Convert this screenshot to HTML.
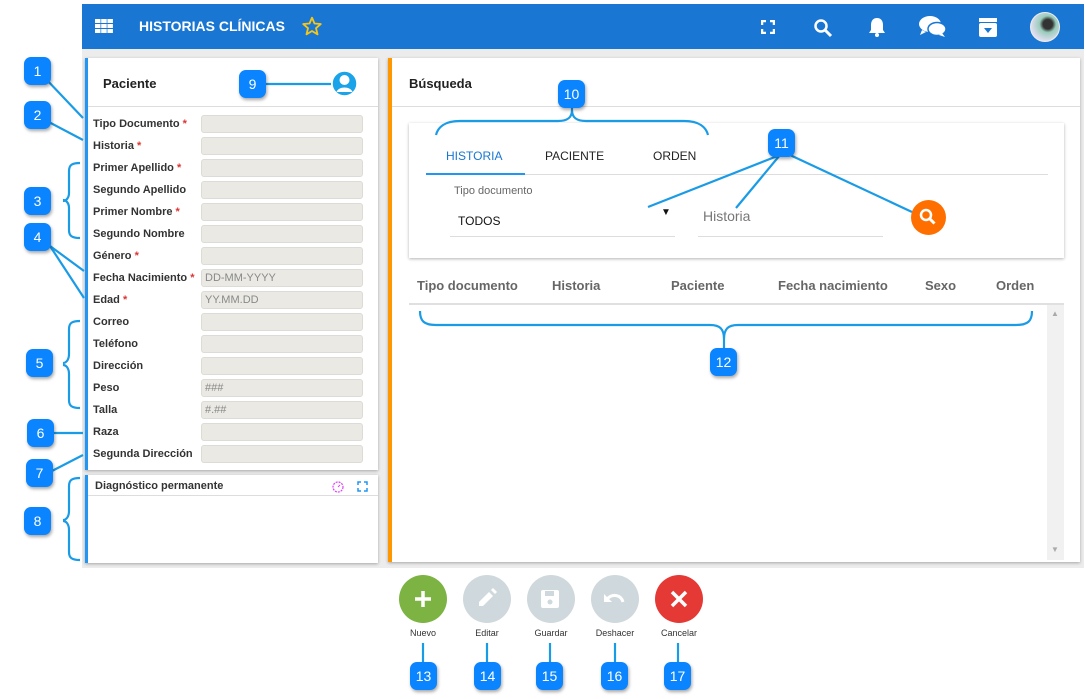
<!DOCTYPE html>
<html><head><meta charset="utf-8"><style>
*{margin:0;padding:0;box-sizing:border-box}
body{width:1086px;height:699px;background:#fff;font-family:"Liberation Sans",Arial,sans-serif;position:relative;overflow:hidden;color:#222}
.abs{position:absolute}
.hdr{left:82px;top:4px;width:1002px;height:45px;background:#1976d2}
.bg{left:82px;top:49px;width:1002px;height:519px;background:#ececec}
.card{background:#fff;box-shadow:0 1px 3px rgba(0,0,0,.3)}
.lbl{left:93px;font-size:11px;font-weight:bold;color:#333}
.lbl b{color:#d33;font-weight:bold}
.inp{left:201px;width:162px;height:18px;background:#eae9e4;border:1px solid #dcdbd6;border-radius:3px;font-size:11px;color:#888;padding:2px 3px}
.co{width:27px;height:28px;background:#0a84ff;border-radius:7px;color:#fff;font-size:14px;text-align:center;line-height:28px;box-shadow:1px 2px 3px rgba(0,0,0,.35);font-family:"Liberation Sans Narrow","Liberation Sans",sans-serif}
.btn{width:48px;height:48px;border-radius:50%;top:575px}
.bl{font-size:9px;color:#333;top:628px;width:70px;text-align:center}
.th{top:278px;font-size:13px;font-weight:bold;color:#666}
</style></head><body>
<div class="abs hdr"></div>
<div class="abs bg"></div>
<svg class="abs" style="left:95px;top:19px" width="18" height="14"><g fill="#fff"><rect x="0" y="0" width="5.5" height="4"/><rect x="6.2" y="0" width="5.5" height="4"/><rect x="12.4" y="0" width="5.5" height="4"/><rect x="0" y="5" width="5.5" height="4"/><rect x="6.2" y="5" width="5.5" height="4"/><rect x="12.4" y="5" width="5.5" height="4"/><rect x="0" y="10" width="5.5" height="4"/><rect x="6.2" y="10" width="5.5" height="4"/><rect x="12.4" y="10" width="5.5" height="4"/></g></svg>
<div class="abs" style="left:139px;top:18px;color:#fff;font-weight:bold;font-size:14px">HISTORIAS CLÍNICAS</div>
<svg class="abs" style="left:302px;top:16px" width="20" height="20" viewBox="0 0 24 24"><path d="M12 2l3 7 7.5.6-5.7 5 1.8 7.4L12 18l-6.6 4 1.8-7.4-5.7-5L9 9z" fill="none" stroke="#f5c518" stroke-width="2.2" stroke-linejoin="round"/></svg>
<svg class="abs" style="left:761px;top:20px" width="14" height="14"><path d="M1 5V1h4M9 1h4v4M13 9v4H9M5 13H1V9" fill="none" stroke="#fff" stroke-width="2.5"/></svg>
<svg class="abs" style="left:813px;top:18px" width="20" height="20"><circle cx="8" cy="8" r="5.5" fill="none" stroke="#fff" stroke-width="2.5"/><path d="M12 12l6 6" stroke="#fff" stroke-width="3"/></svg>
<svg class="abs" style="left:867px;top:16px" width="20" height="22"><path d="M10 2c-4 0-6 3-6 7v5l-2 3h16l-2-3V9c0-4-2-7-6-7z" fill="#fff"/><circle cx="10" cy="19" r="2" fill="#fff"/></svg>
<svg class="abs" style="left:918px;top:15px" width="30" height="24"><ellipse cx="12" cy="9" rx="11" ry="8" fill="#fff"/><path d="M4 15l-2 5 6-3z" fill="#fff"/><ellipse cx="19" cy="14" rx="9" ry="6.5" fill="#fff" stroke="#1976d2" stroke-width="1.5"/><path d="M24 18l3 4-6-2z" fill="#fff"/></svg>
<svg class="abs" style="left:978px;top:17px" width="20" height="21"><rect x="1" y="1" width="18" height="4" fill="#fff"/><rect x="1" y="6" width="18" height="14" rx="2" fill="#fff"/><path d="M6 11h8l-4 5z" fill="#1976d2"/></svg>
<div class="abs" style="left:1030px;top:12px;width:30px;height:30px;border-radius:50%;background:radial-gradient(circle at 60% 40%,#333 0 20%,#9cb 35%,#dde 70%);border:1px solid #eee"></div>

<div class="abs card" style="left:85px;top:58px;width:293px;height:412px;border-left:3px solid #2196f3"></div>
<div class="abs" style="left:103px;top:76px;font-size:13px;font-weight:bold">Paciente</div>
<div class="abs" style="left:88px;top:106px;width:290px;height:1px;background:#ddd"></div>
<svg class="abs" style="left:331px;top:70px" width="27" height="27"><circle cx="13.5" cy="13.5" r="12.5" fill="#1aa3e8" stroke="#fff" stroke-width="1.5"/><circle cx="13.5" cy="10" r="5" fill="#fff"/><path d="M5.5 22c2-6 14-6 16 0z" fill="#fff"/></svg>

<div class="abs lbl" style="top:118px">Tipo Documento <b>*</b></div>
<div class="abs lbl" style="top:140px">Historia <b>*</b></div>
<div class="abs lbl" style="top:162px">Primer Apellido <b>*</b></div>
<div class="abs lbl" style="top:184px">Segundo Apellido</div>
<div class="abs lbl" style="top:206px">Primer Nombre <b>*</b></div>
<div class="abs lbl" style="top:228px">Segundo Nombre</div>
<div class="abs lbl" style="top:250px">Género <b>*</b></div>
<div class="abs lbl" style="top:272px">Fecha Nacimiento <b>*</b></div>
<div class="abs lbl" style="top:294px">Edad <b>*</b></div>
<div class="abs lbl" style="top:316px">Correo</div>
<div class="abs lbl" style="top:338px">Teléfono</div>
<div class="abs lbl" style="top:360px">Dirección</div>
<div class="abs lbl" style="top:382px">Peso</div>
<div class="abs lbl" style="top:404px">Talla</div>
<div class="abs lbl" style="top:426px">Raza</div>
<div class="abs lbl" style="top:448px">Segunda Dirección</div>
<div class="abs inp" style="top:115px"></div>
<div class="abs inp" style="top:137px"></div>
<div class="abs inp" style="top:159px"></div>
<div class="abs inp" style="top:181px"></div>
<div class="abs inp" style="top:203px"></div>
<div class="abs inp" style="top:225px"></div>
<div class="abs inp" style="top:247px"></div>
<div class="abs inp" style="top:269px">DD-MM-YYYY</div>
<div class="abs inp" style="top:291px">YY.MM.DD</div>
<div class="abs inp" style="top:313px"></div>
<div class="abs inp" style="top:335px"></div>
<div class="abs inp" style="top:357px"></div>
<div class="abs inp" style="top:379px">###</div>
<div class="abs inp" style="top:401px">#.##</div>
<div class="abs inp" style="top:423px"></div>
<div class="abs inp" style="top:445px"></div>

<div class="abs card" style="left:85px;top:475px;width:293px;height:88px;border-left:3px solid #2196f3"></div>
<div class="abs" style="left:95px;top:480px;font-size:11px;font-weight:bold;color:#333">Diagnóstico permanente</div>
<div class="abs" style="left:88px;top:495px;width:290px;height:1px;background:#ddd"></div>
<svg class="abs" style="left:332px;top:481px" width="12" height="12"><circle cx="6" cy="6" r="5" fill="none" stroke="#e040fb" stroke-width="1.2" stroke-dasharray="2 1"/><path d="M6 6l2-2" stroke="#e040fb"/></svg>
<svg class="abs" style="left:357px;top:481px" width="11" height="11"><path d="M1 4V1h3M7 1h3v3M10 7v3H7M4 10H1V7" fill="none" stroke="#2196f3" stroke-width="1.5"/></svg>

<div class="abs card" style="left:388px;top:58px;width:692px;height:504px;border-left:4px solid #ff9800"></div>
<div class="abs" style="left:409px;top:76px;font-size:13px;font-weight:bold">Búsqueda</div>
<div class="abs" style="left:392px;top:106px;width:688px;height:1px;background:#ddd"></div>
<div class="abs card" style="left:409px;top:123px;width:655px;height:135px"></div>
<div class="abs" style="left:446px;top:149px;font-size:12px;color:#1976d2">HISTORIA</div>
<div class="abs" style="left:545px;top:149px;font-size:12px;color:#222">PACIENTE</div>
<div class="abs" style="left:653px;top:149px;font-size:12px;color:#222">ORDEN</div>
<div class="abs" style="left:426px;top:174px;width:622px;height:1px;background:#ddd"></div>
<div class="abs" style="left:426px;top:173px;width:99px;height:2px;background:#2196f3"></div>
<div class="abs" style="left:454px;top:185px;font-size:11px;color:#666">Tipo documento</div>
<div class="abs" style="left:458px;top:214px;font-size:12px;color:#111">TODOS</div>
<div class="abs" style="left:661px;top:207px;font-size:10px;color:#111">▼</div>
<div class="abs" style="left:450px;top:236px;width:225px;height:1px;background:#ddd"></div>
<div class="abs" style="left:703px;top:208px;font-size:14px;color:#777">Historia</div>
<div class="abs" style="left:698px;top:236px;width:185px;height:1px;background:#ddd"></div>
<svg class="abs" style="left:910px;top:199px" width="37" height="37"><circle cx="18.5" cy="18.5" r="17.5" fill="#ff6f00"/><circle cx="16" cy="16" r="5" fill="none" stroke="#fff" stroke-width="2.5"/><path d="M19.5 19.5l5 5" stroke="#fff" stroke-width="3"/></svg>

<div class="abs th" style="left:417px">Tipo documento</div>
<div class="abs th" style="left:552px">Historia</div>
<div class="abs th" style="left:671px">Paciente</div>
<div class="abs th" style="left:778px">Fecha nacimiento</div>
<div class="abs th" style="left:925px">Sexo</div>
<div class="abs th" style="left:996px">Orden</div>
<div class="abs" style="left:409px;top:303px;width:655px;height:2px;background:#e0e0e0"></div>
<div class="abs" style="left:1047px;top:305px;width:17px;height:255px;background:#f1f1f1"></div>
<div class="abs" style="left:1051px;top:309px;font-size:8px;color:#aaa">▲</div>
<div class="abs" style="left:1051px;top:545px;font-size:8px;color:#aaa">▼</div>

<div class="abs btn" style="left:399px;background:#7cb342"></div>
<div class="abs btn" style="left:463px;background:#cfd8dc"></div>
<div class="abs btn" style="left:527px;background:#cfd8dc"></div>
<div class="abs btn" style="left:591px;background:#cfd8dc"></div>
<div class="abs btn" style="left:655px;background:#e53935"></div>
<svg class="abs" style="left:399px;top:575px" width="320" height="48">
<path d="M24 16v16M16 24h16" stroke="#fff" stroke-width="3.5"/>
<path d="M80 31l0-4 10-10 4 4-10 10z" fill="#fff"/><path d="M92 15l2-2 4 4-2 2z" fill="#fff"/>
<rect x="142" y="15" width="18" height="18" rx="2" fill="#fff"/><rect x="146" y="16" width="9" height="5" fill="#cfd8dc"/><circle cx="151" cy="27" r="2.5" fill="#cfd8dc"/>
<path d="M208 24c6-6 14-4 16 3" fill="none" stroke="#fff" stroke-width="3"/><path d="M205 19v8h8z" fill="#fff"/>
<path d="M273 17l14 14M287 17l-14 14" stroke="#fff" stroke-width="3.5"/>
</svg>
<div class="abs bl" style="left:388px">Nuevo</div>
<div class="abs bl" style="left:452px">Editar</div>
<div class="abs bl" style="left:516px">Guardar</div>
<div class="abs bl" style="left:580px">Deshacer</div>
<div class="abs bl" style="left:644px">Cancelar</div>

<svg class="abs" style="left:0;top:0" width="1086" height="699">
<g fill="none" stroke="#1a9be6" stroke-width="2.2">
<path d="M45 78L83 118"/><path d="M45 120L83 140"/>
<path d="M80 163c-8 0-11 2-11 8v22c0 5-3 8-6 8M80 238c-8 0-11-2-11-8v-22c0-5-3-8-6-8"/>
<path d="M50 246L84 271M50 246L84 298"/>
<path d="M80 321c-8 0-11 2-11 8v25c0 6-3 9-6 9M80 408c-8 0-11-2-11-8v-26c0-6-3-9-6-9"/>
<path d="M50 433H83"/><path d="M50 472L83 455"/>
<path d="M80 478c-8 0-11 2-11 8v25c0 6-3 9-6 9M80 560c-8 0-11-2-11-8v-22c0-6-3-9-6-9"/>
<path d="M262 84H331"/>
<path d="M572 102v8c0 8-5 11-14 11h-98c-15 0-22 6-24 14M572 102v8c0 8 5 11 14 11h98c15 0 22 6 24 14"/>
<path d="M780 155L648 207M780 155L736 208M790 155L912 212"/>
<path d="M420 311c0 10 4 14 16 14h274c10 0 14 4 14 14M1032 311c0 10-4 14-16 14H738c-10 0-14 4-14 14v10"/>
<path d="M423 643v22M487 643v22M550 643v22M615 643v22M678 643v22"/>
</g></svg>

<div class="abs co" style="left:24px;top:57px">1</div>
<div class="abs co" style="left:24px;top:101px">2</div>
<div class="abs co" style="left:24px;top:187px">3</div>
<div class="abs co" style="left:24px;top:223px">4</div>
<div class="abs co" style="left:26px;top:349px">5</div>
<div class="abs co" style="left:27px;top:419px">6</div>
<div class="abs co" style="left:26px;top:459px">7</div>
<div class="abs co" style="left:24px;top:507px">8</div>
<div class="abs co" style="left:239px;top:70px">9</div>
<div class="abs co" style="left:558px;top:80px">10</div>
<div class="abs co" style="left:768px;top:129px">11</div>
<div class="abs co" style="left:710px;top:348px">12</div>
<div class="abs co" style="left:410px;top:662px">13</div>
<div class="abs co" style="left:474px;top:662px">14</div>
<div class="abs co" style="left:536px;top:662px">15</div>
<div class="abs co" style="left:601px;top:662px">16</div>
<div class="abs co" style="left:664px;top:662px">17</div>
</body></html>
